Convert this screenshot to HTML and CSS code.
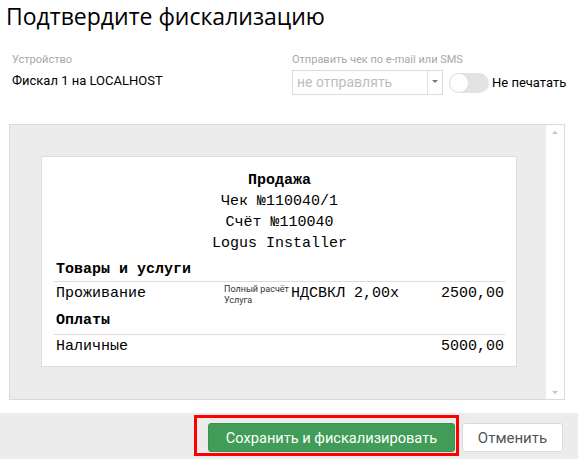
FILE: index.html
```html
<!DOCTYPE html>
<html lang="ru">
<head>
<meta charset="utf-8">
<title>Подтвердите фискализацию</title>
<link rel="stylesheet" href="styles.css">
</head>
<body>
<div class="dialog">
  <h1 class="title">Подтвердите фискализацию</h1>
  <div class="fields">
    <div class="field field-device">
      <div class="label">Устройство</div>
      <div class="value">Фискал 1 на LOCALHOST</div>
    </div>
    <div class="field">
      <div class="label">Отправить чек по e-mail или SMS</div>
      <div class="controls">
        <div class="select">
          <span class="placeholder">не отправлять</span>
          <span class="select-arrow"><span class="caret"></span></span>
        </div>
        <div class="toggle"><span class="knob"></span></div>
        <span class="toggle-label">Не печатать</span>
      </div>
    </div>
  </div>
  <div class="preview">
    <div class="preview-bg">
      <div class="paper">
        <div class="r-title">Продажа</div>
        <div class="r-center">Чек №110040/1</div>
        <div class="r-center">Счёт №110040</div>
        <div class="r-center">Logus Installer</div>
        <div class="r-section">Товары и услуги</div>
        <div class="r-row">
          <span class="r-name">Проживание</span>
          <span class="r-meta"><span>Полный расчёт</span><span>Услуга</span></span>
          <span class="r-vat">НДСВКЛ 2,00x</span>
          <span class="r-sum">2500,00</span>
        </div>
        <div class="r-section r-section-next">Оплаты</div>
        <div class="r-row">
          <span class="r-name">Наличные</span>
          <span class="r-sum">5000,00</span>
        </div>
      </div>
    </div>
    <div class="scrollbar">
      <span class="arrow arrow-up"></span>
      <span class="arrow arrow-down"></span>
    </div>
  </div>
  <div class="footer">
    <button class="btn btn-primary">Сохранить и фискализировать</button>
    <button class="btn btn-cancel">Отменить</button>
    <div class="highlight"></div>
  </div>
</div>
</body>
</html>
```
FILE: styles.css
```css
* { box-sizing: border-box; }
html, body { margin: 0; padding: 0; background: #fff; }
body {
  width: 578px;
  height: 459px;
  overflow: hidden;
  font-family: Roboto, "Noto Sans", sans-serif;
  color: #000;
}
.dialog { width: 578px; }

.title {
  margin: 1px 0 0 6px;
  font-family: "Open Sans", "Noto Sans", sans-serif;
  font-weight: 400;
  font-size: 23px;
  line-height: 30px;
  color: #000;
}

.fields {
  display: flex;
  margin-top: 22px;
  padding-left: 12px;
}
.field-device { width: 280px; }
.label {
  font-size: 11px;
  line-height: 14px;
  color: #a8a8a8;
}
.value {
  margin-top: 5px;
  font-size: 13px;
  line-height: 18px;
  color: #000;
}
.controls {
  display: flex;
  align-items: center;
  margin-top: 3px;
}
.select {
  display: flex;
  width: 151px;
  height: 25px;
  border: 1px solid #dcdcdc;
  background: #fff;
}
.placeholder {
  flex: 1;
  padding-left: 4px;
  font-size: 14px;
  line-height: 23px;
  color: #bdbdbd;
}
.select-arrow {
  width: 15px;
  border-left: 1px solid #e2e2e2;
  display: flex;
  align-items: center;
  justify-content: center;
}
.caret {
  width: 0;
  height: 0;
  border-left: 3px solid transparent;
  border-right: 3px solid transparent;
  border-top: 3px solid #777;
  margin-bottom: 2px;
}
.toggle {
  width: 40px;
  height: 20px;
  margin-left: 6px;
  border-radius: 10px;
  background: #e3e3e3;
  display: flex;
  align-items: center;
}
.knob {
  width: 20px;
  height: 20px;
  border-radius: 50%;
  background: #fff;
  border: 1px solid #e0e0e0;
}
.toggle-label {
  margin-left: 3px;
  font-size: 13px;
  color: #000;
}

.preview {
  display: flex;
  margin: 29px 0 0 9px;
  width: 556px;
  height: 276px;
  border: 1px solid #dadada;
}
.preview-bg {
  flex: 1;
  background: #ececec;
  padding: 31px 0 0 31px;
  overflow: hidden;
}
.scrollbar {
  width: 18px;
  background: #fff;
  display: flex;
  flex-direction: column;
  justify-content: space-between;
  align-items: center;
  padding: 6px 0 5px;
}
.arrow {
  width: 0;
  height: 0;
  border-left: 3px solid transparent;
  border-right: 3px solid transparent;
}
.arrow-up { border-bottom: 3px solid #c4c4c4; }
.arrow-down { border-top: 3px solid #c4c4c4; }

.paper {
  width: 476px;
  background: #fff;
  border: 1px solid #dedede;
  padding: 13px 11px 9px 12px;
  font-family: "Liberation Mono", "Courier New", monospace;
  font-size: 15px;
  color: #000;
}
.r-title, .r-center {
  text-align: center;
  line-height: 21px;
}
.r-title { font-weight: bold; }
.r-section {
  margin-top: 5px;
  padding: 0 0 1px 2px;
  line-height: 21px;
  font-weight: bold;
  border-bottom: 1px solid #dcdcdc;
}
.r-section-next {
  margin-top: 2px;
  padding-bottom: 3px;
}
.r-row {
  display: flex;
  align-items: flex-start;
  line-height: 20px;
  padding: 2px 1px 0 2px;
}
.r-name { width: 168px; flex: none; }
.r-meta {
  display: flex;
  flex-direction: column;
  font-family: Roboto, "Noto Sans", sans-serif;
  font-size: 9px;
  line-height: 11px;
  color: #333;
  padding-bottom: 2px;
}
.r-vat { margin-left: 2px; }
.r-sum { margin-left: auto; }

.footer {
  position: relative;
  margin-top: 13px;
  height: 47px;
  background: #ececec;
  display: flex;
  justify-content: flex-end;
  align-items: flex-start;
  gap: 7px;
  padding: 10px 15px 0 0;
}
.btn {
  height: 29px;
  border-radius: 3px;
  font-family: Roboto, "Noto Sans", sans-serif;
  font-size: 14.6px;
  padding: 0;
  cursor: pointer;
}
.btn-primary {
  width: 247px;
  background: #409c56;
  border: 1px solid #3a9150;
  color: #fff;
}
.btn-cancel {
  width: 101px;
  background: #fff;
  border: 1px solid #dadada;
  color: #555;
  font-size: 15px;
}
.highlight {
  position: absolute;
  left: 194px;
  top: 2px;
  width: 265px;
  height: 41px;
  border: 3px solid #ff0000;
  pointer-events: none;
}
```
